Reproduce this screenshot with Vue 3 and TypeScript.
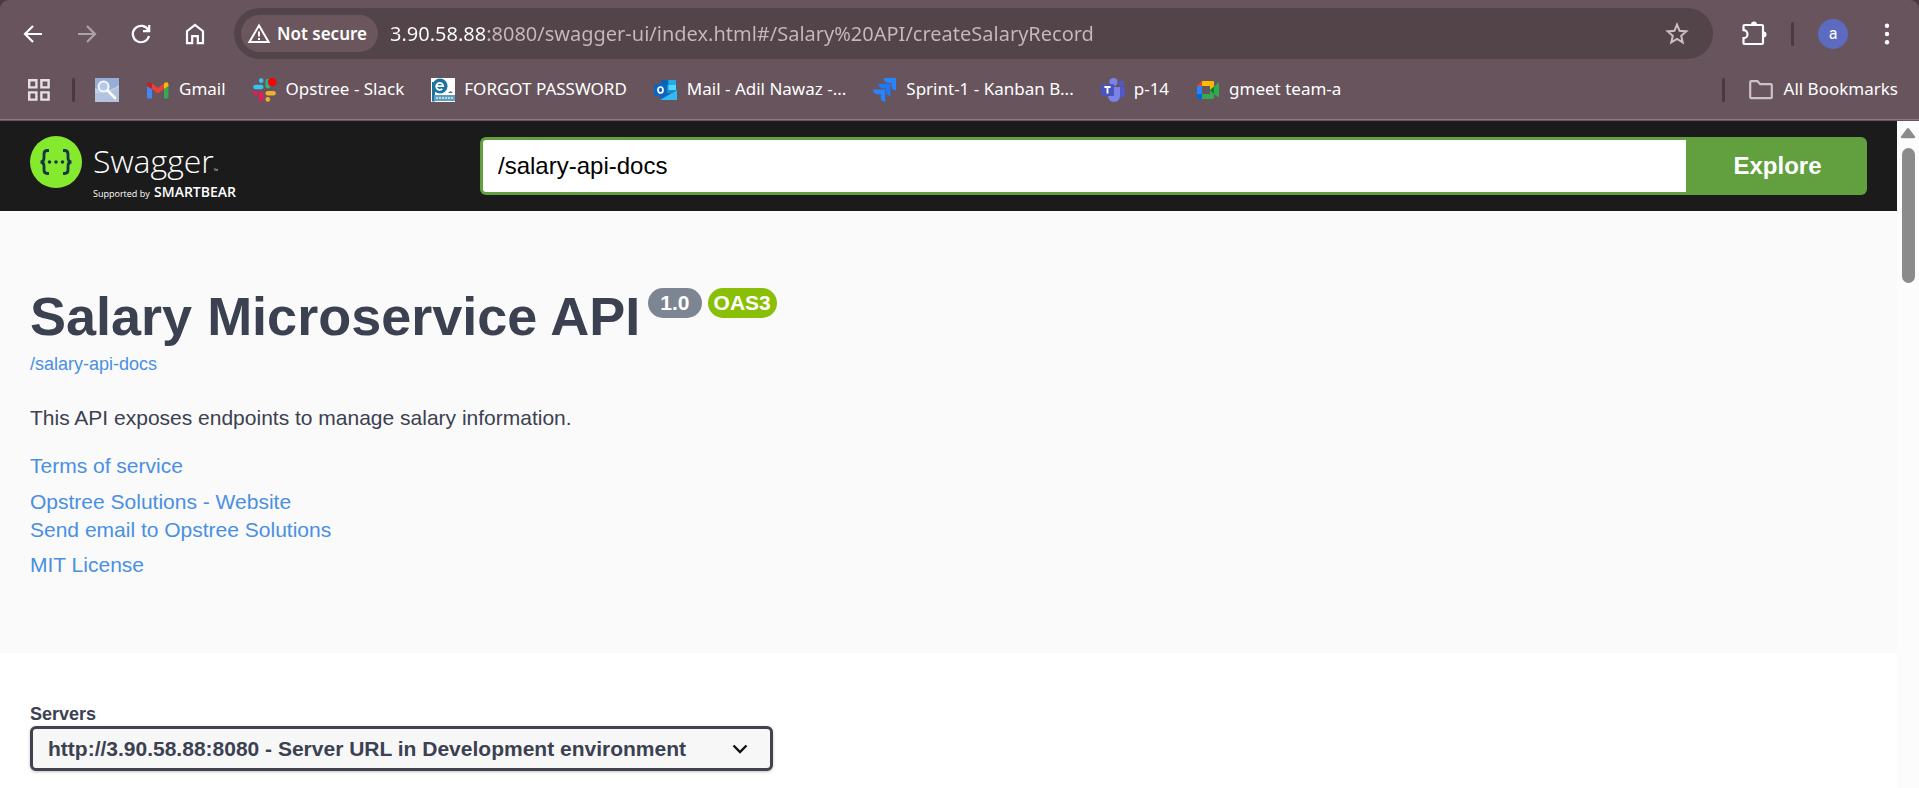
<script setup lang="ts">
import { ref } from 'vue'

interface Bookmark {
  id: string
  label: string
}

const bookmarks: Bookmark[] = [
  { id: 'search', label: '' },
  { id: 'gmail', label: 'Gmail' },
  { id: 'slack', label: 'Opstree - Slack' },
  { id: 'epf', label: 'FORGOT PASSWORD' },
  { id: 'outlook', label: 'Mail - Adil Nawaz -...' },
  { id: 'jira', label: 'Sprint-1 - Kanban B...' },
  { id: 'teams', label: 'p-14' },
  { id: 'meet', label: 'gmeet team-a' },
]

const address = ref('3.90.58.88:8080/swagger-ui/index.html#/Salary%20API/createSalaryRecord')
const specUrl = ref('/salary-api-docs')
const servers = ['http://3.90.58.88:8080 - Server URL in Development environment']
const server = ref(servers[0])
</script>

<template>
  <div class="window">
    <header class="chrome">
      <div class="toolbar">
        <nav class="nav-buttons" aria-label="Browser navigation">
          <button type="button" aria-label="Back">
            <svg viewBox="0 0 24 24"><path d="M21 12H4M12 4l-8 8 8 8" /></svg>
          </button>
          <button type="button" aria-label="Forward" class="dim">
            <svg viewBox="0 0 24 24"><path d="M3 12h17M12 4l8 8-8 8" /></svg>
          </button>
          <button type="button" aria-label="Reload">
            <svg viewBox="0 0 24 24"><path d="M19.3 8.2A8.2 8.2 0 1 0 20 14M20.2 3v6.2H14" /></svg>
          </button>
          <button type="button" aria-label="Home">
            <svg viewBox="0 0 24 24"><path d="M4 21.2V9.2l8-6.2 8 6.2v12h-5.2v-7H9.2v7z" /></svg>
          </button>
        </nav>
        <div class="omnibox">
          <button type="button" class="security">
            <svg viewBox="0 0 24 24"><path d="M12 3.6L21.6 20H2.4zM12 9.5v5M12 16v2" /></svg>
            Not secure
          </button>
          <input v-model="address" class="address" type="text" aria-label="Address" spellcheck="false" />
          <button type="button" class="star" aria-label="Bookmark this page">
            <svg viewBox="0 0 24 24"><path d="M12 2.6l2.6 6.2 6.7.6-5.1 4.4 1.5 6.6-5.7-3.5-5.7 3.5 1.5-6.6-5.1-4.4 6.7-.6z" /></svg>
          </button>
        </div>
        <div class="toolbar-end">
          <button type="button" class="puzzle" aria-label="Extensions">
            <svg viewBox="0 0 28 28">
              <path d="M4.500 5H22q1 0 1 1v17q0 1-1 1H4.500q-1 0-1-1v-4.800a3.800 3.800 0 0 0 0-8V6q0-1 1-1z" />
              <path class="solid" d="M11 4.500a3 3 0 0 1 6 0zM23.500 11.500a3 3 0 0 1 0 6z" />
            </svg>
          </button>
          <span class="divider"></span>
          <button type="button" class="avatar" aria-label="Profile">a</button>
          <button type="button" class="menu" aria-label="Menu">
            <svg viewBox="0 0 24 24"><circle cx="12" cy="3.8" r="2.2" /><circle cx="12" cy="12" r="2.2" /><circle cx="12" cy="20.2" r="2.2" /></svg>
          </button>
        </div>
      </div>

      <div class="bookmarks">
        <button type="button" class="apps" aria-label="Apps">
          <svg viewBox="0 0 22 22"><path d="M1.2 1.2h7.2v7.2H1.2zM13.4 1.2h7.2v7.2h-7.2zM1.2 13.4h7.2v7.2H1.2zM13.4 13.4h7.2v7.2h-7.2z" /></svg>
        </button>
        <span class="divider"></span>
        <div class="bookmark-list">
          <a v-for="mark in bookmarks" :key="mark.id" href="#" class="bookmark" :aria-label="mark.label || 'Search'">
            <svg v-if="mark.id === 'search'" viewBox="0 0 24 24">
              <rect width="24" height="24" fill="#c3cfe6" />
              <path d="M0 0h24v7Q12 16 0 10z" fill="#98aed6" />
              <path d="M0 24V15q12 1 24-6v15z" fill="#b3c2de" />
              <circle cx="8.600" cy="8.600" r="5" fill="#b4c8ea" stroke="#f4f7fd" stroke-width="2" />
              <path d="M12.500 12.500L20 20" stroke="#fff" stroke-width="2.600" stroke-linecap="round" />
            </svg>
            <svg v-else-if="mark.id === 'gmail'" viewBox="0 0 24 24">
              <path d="M1 8v11.500Q1 20.500 2 20.500h4V11z" fill="#4285f4" />
              <path d="M18 11v9.500h3.500q1 0 1-1V8z" fill="#34a853" />
              <path d="M6 11V5.500l6 4.500 6-4.500V11l-6 4.500z" fill="#ea4335" />
              <path d="M1 8V6.500Q1.500 3 5 4.700L6 5.500V11z" fill="#c5221f" />
              <path d="M18 5.500l1-.8q3-1.500 3.500 1.800V8L18 11z" fill="#fbbc04" />
            </svg>
            <svg v-else-if="mark.id === 'slack'" viewBox="0 0 24 24">
              <g stroke-width="4.600" stroke-linecap="round">
                <path d="M2.500 9h5.700" stroke="#36c5f0" /><path d="M8.200 2.600v.1" stroke="#36c5f0" />
                <path d="M14.800 3v5.200" stroke="#2eb67d" />
                <path d="M14.800 15.200h5.700" stroke="#ecb22e" /><path d="M14.800 21.400v.1" stroke="#ecb22e" />
                <path d="M8.200 15.500v5.800M2.500 15.200h.1" stroke="#e01e5a" />
              </g>
              <circle cx="19.300" cy="4" r="4.600" fill="#68545c" />
              <circle cx="19.300" cy="4" r="4" fill="#f00" />
            </svg>
            <svg v-else-if="mark.id === 'epf'" viewBox="0 0 24 24">
              <rect width="24" height="24" fill="#fff" />
              <path d="M2.500 4v19.500" stroke="#1b759f" stroke-width="3" />
              <circle cx="9" cy="8" r="7.600" fill="#1b759f" />
              <path d="M5.600 8.200h6.600a3.500 3.500 0 1 0-1 2.700" fill="none" stroke="#fff" stroke-width="1.800" />
              <path d="M3 17h21v6H3z" fill="#5b9fbd" />
              <path d="M5 20h18" stroke="#b9d9e6" stroke-width="2" stroke-dasharray="2 1" />
              <path d="M17 15l2.500-2L22 15z" fill="#666" />
            </svg>
            <svg v-else-if="mark.id === 'outlook'" viewBox="0 0 24 24">
              <path d="M7 2h15v13H7z" fill="#1490df" />
              <path d="M7 2h7.500v5H7z" fill="#0364b8" /><path d="M14.500 7H22v5h-7.500z" fill="#50d9ff" />
              <path d="M14.500 2H22v5h-7.500z" fill="#28a8ea" />
              <path d="M6 11l9 5 8-4.500V22H6z" fill="#1066b5" />
              <path d="M6 22l17-10v10z" fill="#35b8f1" />
              <rect y="6" width="13" height="12" rx="1" fill="#0f65bd" />
              <ellipse cx="6.500" cy="12" rx="2.500" ry="3" fill="none" stroke="#fff" stroke-width="1.700" />
            </svg>
            <svg v-else-if="mark.id === 'jira'" viewBox="0 0 24 24">
              <path d="M10.500 0H23v12.500q-4.500-.5-4.500-5V4.700H15q-4 0-4.500-4.700z" fill="#2684ff" />
              <path d="M5.300 5.800h12.200v12.400q-4.500-.5-4.500-5v-2.700H10q-4.200 0-4.700-4.700z" fill="#2178f5" />
              <path d="M0 11.500h12.200V24q-4.500-.5-4.500-5v-2.700H4.700Q.5 16.300 0 11.500z" fill="#2684ff" />
            </svg>
            <svg v-else-if="mark.id === 'teams'" viewBox="0 0 24 24">
              <circle cx="20.300" cy="5.500" r="2.700" fill="#5059c9" />
              <path d="M17 9h7v7q-1 4-5 4h-2z" fill="#5059c9" />
              <circle cx="12.500" cy="4" r="4" fill="#7b83eb" />
              <path d="M7 9h12v9a6 6 0 0 1-12 0z" fill="#7b83eb" />
              <rect y="6" width="13" height="12" rx="1" fill="#4b53bc" />
              <path d="M3.400 9h6.200M6.500 9v6.500" stroke="#fff" stroke-width="1.900" />
            </svg>
            <svg v-else viewBox="0 0 24 24">
              <path d="M1 8h5v8H1z" fill="#2684fc" />
              <path d="M6 3v5H1z" fill="#ea4335" />
              <path d="M6 3h11q1 0 1 1v6l-4 3V8H6z" fill="#ffba00" />
              <path d="M1 16h5v5H2.500Q1 21 1 19.500z" fill="#0066da" />
              <path d="M6 16h8v-4l8-7q1-.5 1 .5v13q0 1-1 .5l-4-3v4q0 1-1 1H6z" fill="#34a853" />
              <path d="M14 12l4-3.500V16z" fill="#00832d" />
            </svg>
            <span v-if="mark.label" class="label">{{ mark.label }}</span>
          </a>
        </div>
        <span class="divider"></span>
        <button type="button" class="all">
          <svg viewBox="0 0 24 24"><path d="M2.200 3.200h6.300l2.700 3h10.600q1 0 1 1v12q0 1-1 1H2.200q-1 0-1-1v-15q0-1 1-1z" /></svg>
          <span class="label">All Bookmarks</span>
        </button>
      </div>
    </header>

    <div class="viewport">
      <div class="page">
        <div class="topbar">
          <a href="#" class="brand">
            <svg class="brand-mark" viewBox="0 0 52 52">
              <circle cx="26" cy="26" r="26" fill="#85ea2d" />
              <g fill="none" stroke="#173647" stroke-width="2.800">
                <path d="M19 14.500h-1.500q-3.500 0-3.500 3.500v4q0 4-3.500 4 3.500 0 3.500 4v4q0 3.500 3.500 3.500H19" />
                <path d="M33 14.500h1.500q3.500 0 3.500 3.500v4q0 4 3.500 4-3.500 0-3.500 4v4q0 3.500-3.500 3.500H33" />
              </g>
              <g fill="#173647"><circle cx="19.500" cy="26" r="1.800" /><circle cx="26" cy="26" r="1.800" /><circle cx="32.500" cy="26" r="1.800" /></g>
            </svg>
            <span class="brand-text">
              <span class="brand-name">Swagger<small>™</small></span>
              <span class="brand-by">Supported by <b>SMARTBEAR</b></span>
            </span>
          </a>
          <form class="download" @submit.prevent>
            <input v-model="specUrl" type="text" aria-label="API definition URL" spellcheck="false" />
            <button type="submit">Explore</button>
          </form>
        </div>

        <section class="info">
          <div class="title-row">
            <h1>Salary Microservice API</h1>
            <span class="badge">1.0</span>
            <span class="badge oas">OAS3</span>
          </div>
          <a href="#" class="spec-link">/salary-api-docs</a>
          <p class="description">This API exposes endpoints to manage salary information.</p>
          <a href="#" class="terms">Terms of service</a>
          <div class="contact">
            <a href="#">Opstree Solutions - Website</a>
            <a href="#">Send email to Opstree Solutions</a>
          </div>
          <a href="#" class="license">MIT License</a>
        </section>

        <section class="servers">
          <label for="server">Servers</label>
          <div class="select-wrap">
            <select id="server" v-model="server">
              <option v-for="s in servers" :key="s" :value="s">{{ s }}</option>
            </select>
            <svg viewBox="0 0 16 10" aria-hidden="true"><path d="M1.500 1.500L8 8l6.500-6.500" /></svg>
          </div>
        </section>
      </div>
      <div class="scrollbar" aria-hidden="true">
        <svg viewBox="0 0 16 12"><path d="M7 1.500q1-1.200 2 0l6 8q.8 1.700-1 1.700H2q-1.800 0-1-1.700z" /></svg>
        <span class="thumb"></span>
      </div>
    </div>
  </div>
</template>

<style>
body {
  background: #483a40;
}
</style>

<style scoped>
* {
  box-sizing: border-box;
}
button,
input,
select {
  font: inherit;
  color: inherit;
  margin: 0;
  padding: 0;
  border: 0;
  background: none;
  outline: none;
}
a {
  text-decoration: none;
}
svg {
  display: block;
  flex: none;
}
.window {
  display: flex;
  flex-direction: column;
  min-height: 100vh;
  font-family: "Liberation Sans", Arial, sans-serif;
  color: #3b4151;
}
.chrome {
  background: #68545c;
  border-radius: 9px 9px 0 0;
  padding: 8px 0 1px;
  color: #fff;
  font: 17px/24px "Noto Sans", "Open Sans", sans-serif;
  box-shadow: inset 0 -1px #68545c, inset 0 -2px #8f7982;
}
.toolbar {
  display: flex;
  align-items: center;
}
.nav-buttons {
  display: flex;
  gap: 30px;
  padding: 0 27px 0 21px;
}
.toolbar svg {
  width: 24px;
  height: 24px;
  fill: none;
  stroke: #fff;
  stroke-width: 2.2;
}
.nav-buttons .dim {
  opacity: 0.45;
}
.omnibox {
  flex: 1;
  display: flex;
  align-items: center;
  height: 51px;
  padding: 0 24px 0 7px;
  border-radius: 26px;
  background: #53444a;
}
.security {
  display: flex;
  align-items: center;
  gap: 6px;
  height: 37px;
  padding: 0 11px 0 6px;
  border-radius: 19px;
  background: #6b565e;
  font-size: 17px;
  font-weight: 600;
  white-space: nowrap;
}
.toolbar .security svg {
  stroke-width: 2;
}
.address {
  flex: 1;
  height: 30px;
  margin-left: 12px;
  font-size: 20px;
  background: linear-gradient(90deg, #fff 97px, #c6b9be 97px);
  background-clip: text;
  -webkit-background-clip: text;
  -webkit-text-fill-color: transparent;
}
.toolbar .star svg {
  stroke: #c9c0c4;
  stroke-width: 2;
}
.toolbar-end {
  display: flex;
  align-items: center;
  padding: 0 20px 0 27px;
}
.toolbar .puzzle svg {
  width: 28px;
  height: 28px;
}
.toolbar .puzzle .solid {
  fill: #fff;
  stroke: none;
}
.divider {
  flex: none;
  width: 3px;
  height: 24px;
  border-radius: 2px;
  background: #493a40;
}
.toolbar-end .divider {
  margin: 0 24px 0 23px;
}
.avatar {
  width: 30px;
  height: 30px;
  border-radius: 50%;
  background: #5c6bc0;
  font: 16px/28px Roboto, sans-serif;
}
.menu {
  margin-left: 27px;
}
.toolbar .menu svg {
  fill: #fff;
  stroke: none;
}
.bookmarks {
  display: flex;
  align-items: center;
  height: 61px;
  padding: 0 21px 0 28px;
}
.apps {
  margin-right: 22px;
}
.apps svg {
  width: 22px;
  height: 22px;
  fill: none;
  stroke: #e6e0e3;
  stroke-width: 2.4;
}
.bookmark-list {
  flex: 1;
  display: flex;
  gap: 27px;
  padding-left: 20px;
}
.bookmark,
.all {
  display: flex;
  align-items: center;
  color: #fff;
  white-space: nowrap;
}
.bookmark {
  gap: 9px;
}
.label {
  padding-bottom: 2px;
  line-height: 22px;
}
.bookmark svg,
.all svg {
  width: 24px;
  height: 24px;
}
.all {
  gap: 11px;
  margin-left: 24px;
}
.all svg {
  fill: none;
  stroke: #c9c3c6;
  stroke-width: 2.2;
}
.viewport {
  flex: 1;
  display: flex;
}
.page {
  flex: 1;
  display: flex;
  flex-direction: column;
  background: #fafafa;
}
.topbar {
  display: flex;
  align-items: center;
  height: 90px;
  padding: 0 30px;
  background: #1b1b1b;
}
.brand {
  flex: 1;
  max-width: 450px;
  display: flex;
  gap: 11px;
  height: 60px;
  color: #fff;
  font-family: "Open Sans", "Noto Sans", sans-serif;
}
.brand-mark {
  width: 52px;
  height: 52px;
}
.brand-text {
  display: flex;
  flex-direction: column;
  padding-top: 11px;
}
.brand-name {
  font-size: 32px;
  font-weight: 300;
  line-height: 28px;
}
.brand-name small {
  font-size: 6px;
}
.brand-by {
  font-size: 9px;
  line-height: 14px;
}
.brand-by b {
  margin-left: 2px;
  font-size: 14px;
  font-weight: 600;
  line-height: 14px;
}
.download {
  flex: 3;
  display: flex;
  height: 58px;
  font-size: 24px;
}
.download input {
  flex: 1;
  min-width: 0;
  padding: 0 15px;
  border: 3px solid #62a03f;
  border-right: 0;
  border-radius: 6px 0 0 6px;
  background: #fff;
  color: #000;
}
.download button {
  width: 181px;
  padding-left: 2px;
  border-radius: 0 6px 6px 0;
  background: #62a03f;
  color: #fff;
  font-weight: 700;
}
.info {
  display: flex;
  flex-direction: column;
  align-items: flex-start;
  padding: 75px 30px 74px;
  font-size: 21px;
  line-height: 28px;
}
.info a {
  color: #4990e2;
}
.title-row {
  display: flex;
  align-items: flex-start;
}
h1 {
  margin: 0;
  font-size: 54px;
  line-height: 60px;
}
.badge {
  margin: 2px 0 0 8px;
  padding: 0 12px;
  border-radius: 15px;
  background: #7d8492;
  color: #fff;
  font-size: 21px;
  font-weight: 700;
  line-height: 30px;
}
.badge.oas {
  margin-left: 6px;
  padding: 0 6px;
  background: #89bf04;
}
.info .spec-link {
  margin-top: 3px;
  font-size: 18px;
  line-height: 30px;
}
.description {
  margin: 25px 0 20px;
}
.contact {
  display: flex;
  flex-direction: column;
  margin: 8px 0 7px;
}
.servers {
  flex: 1;
  display: flex;
  flex-direction: column;
  align-items: flex-start;
  padding: 49px 30px 17px;
  background: #fff;
  box-shadow: 0 1px 2px rgba(0, 0, 0, 0.15);
}
.servers label {
  font-size: 18px;
  font-weight: 700;
  line-height: 24px;
}
.select-wrap {
  display: grid;
  align-items: center;
}
.select-wrap > * {
  grid-area: 1 / 1;
}
.select-wrap select {
  appearance: none;
  height: 45px;
  padding: 0 83px 0 15px;
  border: 3px solid #41444e;
  border-radius: 6px;
  background: #f7f7f7;
  box-shadow: 0 1px 3px rgba(0, 0, 0, 0.25);
  color: #3b4151;
  font-size: 21px;
  font-weight: 700;
}
.select-wrap svg {
  justify-self: end;
  width: 16px;
  height: 10px;
  margin-right: 25px;
  fill: none;
  stroke: #111;
  stroke-width: 2.4;
  pointer-events: none;
}
.scrollbar {
  width: 22px;
  display: flex;
  flex-direction: column;
  align-items: center;
  gap: 9px;
  padding-top: 6px;
  background: #fcfcfc;
}
.scrollbar svg {
  width: 16px;
  height: 12px;
  fill: #8b8b8b;
}
.thumb {
  width: 13px;
  height: 135px;
  border-radius: 7px;
  background: #8b8b8b;
}
</style>
